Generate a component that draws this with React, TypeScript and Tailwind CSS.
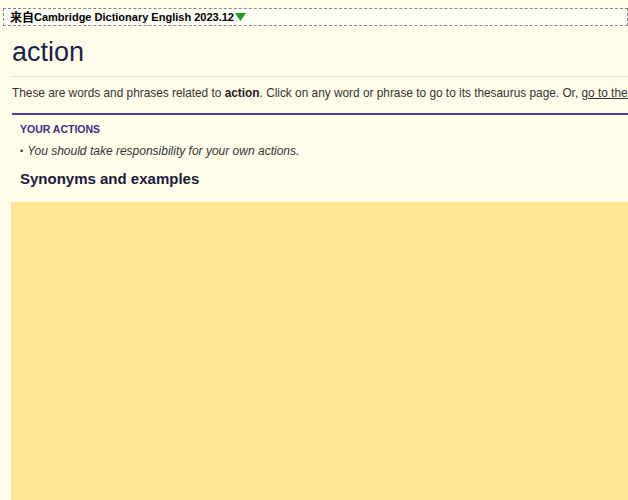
export default function App() {
  return (
    <div className="h-[500px] w-[628px] overflow-hidden bg-[#fffde9] font-['Liberation_Sans',Arial,sans-serif]">
      {/* Source bar */}
      <div className="pt-[8px] pl-[3px]">
        <div className="flex h-[18px] items-center border border-dashed border-[#888] bg-[#fffef6] pl-[6px] text-[11px] font-bold leading-none text-black whitespace-nowrap">
          <span className="font-['Noto_Sans_CJK_SC',sans-serif] text-[12px] font-bold">来自</span>
          <span>Cambridge Dictionary English 2023.12</span>
          <svg width="11" height="8" viewBox="0 0 11 8" className="ml-[1px]">
            <path d="M0 0 L11 0 L5.5 8 Z" fill="#1f9a2a" />
          </svg>
        </div>
      </div>

      <div className="pl-[12px]">
        <h1 className="mt-[9px] text-[27px] leading-[34px] text-[#1c1f4a]">action</h1>

        <div className="mt-[7px] border-t border-[#e4e2cc]" />

        <p className="mt-[8px] whitespace-nowrap text-[11.85px] leading-[16px] text-[#333]">
          These are words and phrases related to <b className="text-[#222]">action</b>. Click on any word or phrase to go to its thesaurus page. Or,{' '}
          <span className="underline">go to the definition of action</span>
        </p>

        <div className="mt-[12px] border-t-2 border-[#4a3c99]" />

        <div className="pl-[8px]">
          <div className="mt-[7px] text-[10.5px] font-bold leading-[14px] text-[#3c2f86]">YOUR ACTIONS</div>
          <div className="mt-[7px] flex items-center text-[12px] leading-[16px] text-[#333]">
            <span className="mr-[4px] text-[9px]">•</span>
            <i>You should take responsibility for your own actions.</i>
          </div>
          <h2 className="mt-[11px] text-[15px] font-bold leading-[18px] text-[#1a1a3a]">Synonyms and examples</h2>
        </div>

        <div className="mt-[14px] ml-[-1px] h-[400px] bg-[#ffe697]" />
      </div>
    </div>
  )
}
